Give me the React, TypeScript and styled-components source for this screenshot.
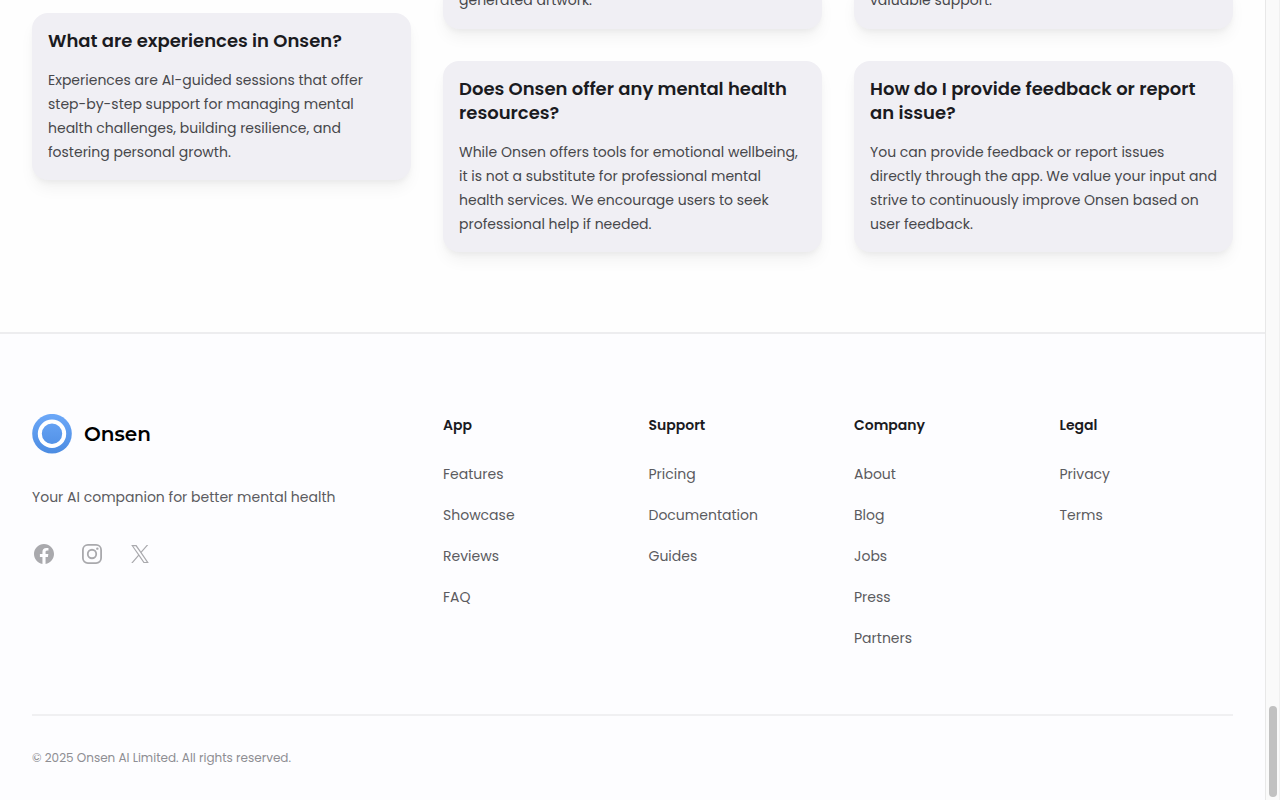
import React from "react";
import styled, { createGlobalStyle } from "styled-components";

const GlobalStyle = createGlobalStyle`
  *, *::before, *::after { box-sizing: border-box; }
  body {
    margin: 0;
    background: #fefefe;
    color: #1b1b1f;
    font-family: Poppins, Inter, "Open Sans", sans-serif;
    font-size: 14px;
    overflow: hidden;
  }
  h2, h3, p, ul { margin: 0; padding: 0; }
`;

const Shell = styled.div`
  display: flex;
  min-height: 100vh;
`;

const Page = styled.div`
  flex: 1;
  min-width: 0;
  display: flex;
  flex-direction: column;
`;

const ScrollTrack = styled.div`
  width: 15px;
  display: flex;
  flex-direction: column;
  justify-content: flex-end;
  align-items: center;
  padding-bottom: 3px;
  background: #fafafa;
  border-left: 1px solid #e8e8e8;
  border-right: 1px solid #f0f0f0;
`;

const ScrollThumb = styled.div`
  width: 8px;
  height: 91px;
  border-radius: 4px;
  background: #c1c1c1;
`;

const FaqSection = styled.main`
  display: grid;
  grid-template-columns: repeat(3, minmax(0, 1fr));
  gap: 32px;
  padding: 0 32px 80px;
  overflow: hidden;
`;

const FaqColumn = styled.div<{ $start: number }>`
  display: flex;
  flex-direction: column;
  gap: 32px;
  margin-top: ${(p) => p.$start}px;
`;

const Card = styled.article<{ $tail?: boolean }>`
  padding: ${(p) => (p.$tail ? "0 16px 17px" : "16px")};
  border-radius: ${(p) => (p.$tail ? "0 0 16px 16px" : "16px")};
  background: #f0eff4;
  box-shadow: 0 10px 16px -2px rgba(0, 0, 0, 0.05), 0 4px 6px -2px rgba(0, 0, 0, 0.05);
`;

const Question = styled.h2`
  margin-bottom: 15px;
  font-size: 18px;
  line-height: 24px;
  font-weight: 600;
`;

const Answer = styled.p`
  line-height: 24px;
  color: #47474b;
`;

const FooterBar = styled.footer`
  flex: 1;
  padding: 80px 32px 32px;
  background: #fdfdff;
  border-top: 2px solid #ededef;
`;

const FooterGrid = styled.div`
  display: grid;
  grid-template-columns: repeat(3, minmax(0, 1fr));
  column-gap: 32px;
`;

const Brand = styled.a`
  display: flex;
  align-items: center;
  gap: 12px;
  margin-bottom: 32px;
  color: #000;
  text-decoration: none;
  font-family: Montserrat, Inter, sans-serif;
  font-size: 20px;
  line-height: 24px;
  font-weight: 600;
`;

const Tagline = styled.p`
  margin-bottom: 34px;
  line-height: 22px;
  color: #5b5b60;
`;

const Socials = styled.div`
  display: flex;
  gap: 24px;
`;

const SocialLink = styled.a`
  display: flex;
  color: #a9a9ad;
`;

const LinkGroups = styled.nav`
  grid-column: span 2;
  display: grid;
  grid-template-columns: repeat(4, minmax(0, 1fr));
  column-gap: 32px;
`;

const GroupTitle = styled.h3`
  margin-bottom: 28px;
  font-size: 14px;
  line-height: 22px;
  font-weight: 600;
`;

const LinkList = styled.ul`
  display: flex;
  flex-direction: column;
  gap: 20px;
  list-style: none;
  line-height: 21px;
`;

const FooterLink = styled.a`
  color: #5b5b60;
  text-decoration: none;
`;

const Legal = styled.p`
  margin-top: 65px;
  padding-top: 32px;
  border-top: 2px solid #f0f0f2;
  font-size: 12px;
  line-height: 20px;
  color: #8e8e93;
`;

const faqColumns = [
  {
    start: 13,
    tail: "",
    question: "What are experiences in Onsen?",
    answer:
      "Experiences are AI-guided sessions that offer step-by-step support for managing mental health challenges, building resilience, and fostering personal growth.",
  },
  {
    start: -12,
    tail: "generated artwork.",
    question: "Does Onsen offer any mental health resources?",
    answer:
      "While Onsen offers tools for emotional wellbeing, it is not a substitute for professional mental health services. We encourage users to seek professional help if needed.",
  },
  {
    start: -12,
    tail: "valuable support.",
    question: "How do I provide feedback or report an issue?",
    answer:
      "You can provide feedback or report issues directly through the app. We value your input and strive to continuously improve Onsen based on user feedback.",
  },
];

const groups = [
  { title: "App", links: ["Features", "Showcase", "Reviews", "FAQ"] },
  { title: "Support", links: ["Pricing", "Documentation", "Guides"] },
  { title: "Company", links: ["About", "Blog", "Jobs", "Press", "Partners"] },
  { title: "Legal", links: ["Privacy", "Terms"] },
];

function Logo() {
  return (
    <svg width="40" height="40" viewBox="0 0 40 40" aria-hidden="true">
      <defs>
        <linearGradient id="ring" x1="0" y1="0" x2="0" y2="1">
          <stop offset="0" stopColor="#6ca8f8" />
          <stop offset="1" stopColor="#4c8ce2" />
        </linearGradient>
      </defs>
      <circle cx="20" cy="19.7" r="19.8" fill="url(#ring)" />
      <circle cx="20" cy="19.7" r="12.2" fill="none" stroke="#fff" strokeWidth="4" />
    </svg>
  );
}

function FacebookIcon() {
  return (
    <svg width="24" height="24" viewBox="0 0 24 24" fill="currentColor" aria-hidden="true">
      <path d="M22 12c0-5.523-4.477-10-10-10S2 6.477 2 12c0 4.991 3.657 9.128 8.438 9.878v-6.987h-2.54V12h2.54V9.797c0-2.506 1.492-3.89 3.777-3.89 1.094 0 2.238.195 2.238.195v2.46h-1.26c-1.243 0-1.63.771-1.63 1.562V12h2.773l-.443 2.89h-2.33v6.988C18.343 21.128 22 16.991 22 12z" />
    </svg>
  );
}

function InstagramIcon() {
  return (
    <svg width="24" height="24" viewBox="0 0 24 24" fill="none" stroke="currentColor" strokeWidth="1.8" aria-hidden="true">
      <rect x="2.9" y="2.9" width="18.2" height="18.2" rx="5" />
      <circle cx="12" cy="12" r="4.235" />
      <circle cx="17.34" cy="6.66" r="1.2" fill="currentColor" stroke="none" />
    </svg>
  );
}

function XIcon() {
  return (
    <svg width="24" height="24" viewBox="0 0 24 24" fill="currentColor" aria-hidden="true">
      <path d="M13.6823 10.6218L20.2391 3H18.6854L12.9921 9.61788L8.44486 3H3.2002L10.0765 13.0074L3.2002 21H4.75404L10.7663 14.0113L15.5685 21H20.8131L13.6819 10.6218H13.6823ZM11.5541 13.0956L10.8574 12.0991L5.31391 4.16971H7.70053L12.1742 10.5689L12.8709 11.5655L18.6861 19.8835H16.2995L11.5541 13.096V13.0956Z" />
    </svg>
  );
}

export default function App() {
  return (
    <>
      <GlobalStyle />
      <Shell>
        <Page>
          <FaqSection>
            {faqColumns.map((col) => (
              <FaqColumn key={col.question} $start={col.start}>
                {col.tail && (
                  <Card $tail>
                    <Answer>{col.tail}</Answer>
                  </Card>
                )}
                <Card>
                  <Question>{col.question}</Question>
                  <Answer>{col.answer}</Answer>
                </Card>
              </FaqColumn>
            ))}
          </FaqSection>
          <FooterBar>
            <FooterGrid>
              <div>
                <Brand href="#">
                  <Logo />
                  Onsen
                </Brand>
                <Tagline>Your AI companion for better mental health</Tagline>
                <Socials>
                  <SocialLink href="#" aria-label="Facebook"><FacebookIcon /></SocialLink>
                  <SocialLink href="#" aria-label="Instagram"><InstagramIcon /></SocialLink>
                  <SocialLink href="#" aria-label="X"><XIcon /></SocialLink>
                </Socials>
              </div>
              <LinkGroups aria-label="Footer">
                {groups.map((group) => (
                  <section key={group.title}>
                    <GroupTitle>{group.title}</GroupTitle>
                    <LinkList>
                      {group.links.map((link) => (
                        <li key={link}>
                          <FooterLink href="#">{link}</FooterLink>
                        </li>
                      ))}
                    </LinkList>
                  </section>
                ))}
              </LinkGroups>
            </FooterGrid>
            <Legal>© 2025 Onsen AI Limited. All rights reserved.</Legal>
          </FooterBar>
        </Page>
        <ScrollTrack>
          <ScrollThumb />
        </ScrollTrack>
      </Shell>
    </>
  );
}
